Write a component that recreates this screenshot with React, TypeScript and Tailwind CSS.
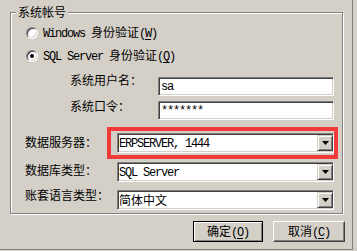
import type { ReactNode } from 'react';

// Win2000 style bevels
const sunken =
    'border border-t-[#808080] border-l-[#808080] border-r-white border-b-white shadow-[inset_1px_1px_0_#404040,inset_-1px_-1px_0_#d4d0c8] bg-white';
const raised =
    'border border-t-[#d4d0c8] border-l-[#d4d0c8] border-r-[#404040] border-b-[#404040] shadow-[inset_1px_1px_0_#fff,inset_-1px_-1px_0_#808080] bg-[#d4d0c8]';

// latin text uses a 6px wide mono, like the old bitmap font
function L({ children, className = '' }: { children: ReactNode; className?: string }) {
    return <span className={`font-['Liberation_Mono',monospace] text-[12px] tracking-[-1.2px] ${className}`}>{children}</span>;
}

function Radio({ checked }: { checked?: boolean }) {
    return (
        <span className="flex h-[12px] w-[12px] shrink-0 items-center justify-center rounded-full border border-t-[#808080] border-l-[#808080] border-r-white border-b-white bg-white shadow-[inset_1px_1px_0_#404040,inset_-1px_-1px_0_#d4d0c8]">
            {checked && <span className="h-[4px] w-[4px] rounded-full bg-black" />}
        </span>
    );
}

function Combo({ children }: { children: ReactNode }) {
    return (
        <div className={`flex h-[20px] w-[217px] items-center ${sunken}`}>
            <div className="flex-1 pl-[1px]">{children}</div>
            <div className={`flex h-[16px] w-[16px] items-center justify-center ${raised}`}>
                <svg width="7" height="4" viewBox="0 0 7 4">
                    <polygon points="0,0 7,0 3.5,4" fill="#000" />
                </svg>
            </div>
        </div>
    );
}

export default function App() {
    return (
        <div className="h-[251px] w-[357px] overflow-hidden bg-[#d4d0c8] font-['Noto_Sans_CJK_SC',sans-serif] text-[12px] leading-[14px] text-black">
            <div className="flex h-[250px] w-[353px] flex-col border-r border-b border-[#808080] pt-[12px] pr-[7px] pl-[10px]">
                {/* 系统帐号 group */}
                <div className="relative flex h-[202px] w-[333px] flex-col border border-[#808080] shadow-[inset_1px_1px_0_#fff,1px_1px_0_#fff]">
                    <span className="absolute top-[-8px] left-[5px] bg-[#d4d0c8] px-[2px]">系统帐号</span>

                    <div className="mt-[14px] ml-[15px] flex h-[12px] items-center gap-[5px]">
                        <Radio />
                        <span className="whitespace-pre">
                            <L>Windows </L>身份验证<L>(<span className="underline underline-offset-2">W</span>)</L>
                        </span>
                    </div>
                    <div className="mt-[11px] ml-[15px] flex h-[12px] items-center gap-[5px]">
                        <Radio checked />
                        <span className="whitespace-pre">
                            <L>SQL Server </L>身份验证<L>(<span className="underline underline-offset-2">Q</span>)</L>
                        </span>
                    </div>

                    <div className="mt-[15px] ml-[59px] flex items-start">
                        <span className="-mt-[4px] w-[88px]">系统用户名：</span>
                        <div className={`flex h-[19px] w-[176px] items-center pl-[2px] ${sunken}`}>
                            <L>sa</L>
                        </div>
                    </div>
                    <div className="mt-[5px] ml-[59px] flex items-start">
                        <span className="-mt-[2px] w-[88px]">系统口令：</span>
                        <div className={`flex h-[19px] w-[176px] items-center pl-[2px] ${sunken}`}>
                            <L>*******</L>
                        </div>
                    </div>

                    <div className="relative mt-[13px] ml-[14px] flex items-start">
                        <span className="mt-[2px] w-[92px]">数据服务器：</span>
                        <Combo>
                            <L>ERPSERVER, 1444</L>
                        </Combo>
                        <div className="absolute top-[-6px] left-[82px] h-[32px] w-[231px] border-4 border-[#f23a3a]" />
                    </div>
                    <div className="mt-[9px] ml-[14px] flex items-start">
                        <span className="mt-[1px] w-[92px]">数据库类型：</span>
                        <Combo>
                            <L>SQL Server</L>
                        </Combo>
                    </div>
                    <div className="mt-[8px] ml-[14px] flex items-start">
                        <span className="-mt-[2px] w-[92px]">账套语言类型：</span>
                        <Combo>简体中文</Combo>
                    </div>
                </div>

                {/* buttons */}
                <div className="mt-[7px] flex justify-end gap-[10px]">
                    <button className="h-[21px] w-[70px] border border-black bg-[#d4d0c8] shadow-[inset_1px_1px_0_#fff,inset_-1px_-1px_0_#808080]">
                        确定<L>(<span className="underline underline-offset-2">O</span>)</L>
                    </button>
                    <button className="h-[21px] w-[72px] border border-t-white border-l-white border-r-[#404040] border-b-[#404040] bg-[#d4d0c8] shadow-[inset_-1px_-1px_0_#808080]">
                        取消<L>(<span className="underline underline-offset-2">C</span>)</L>
                    </button>
                </div>
            </div>
        </div>
    );
}
